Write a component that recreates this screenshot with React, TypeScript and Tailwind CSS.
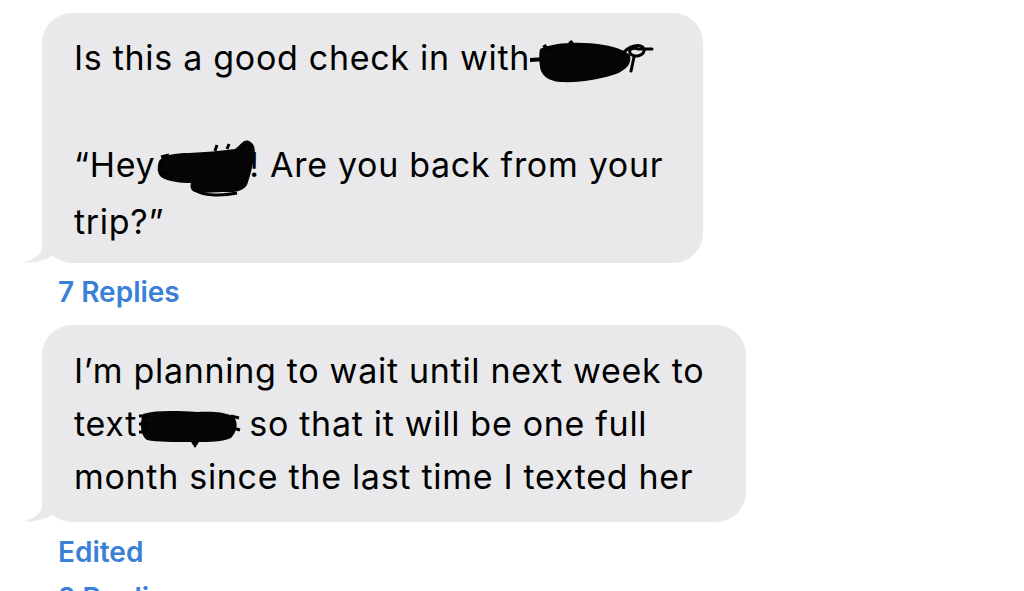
import React from "react"

const Tail = () => (
  <svg
    className="absolute left-[-22px] bottom-0"
    width="62"
    height="40"
    viewBox="0 0 62 40"
  >
    <path
      d="M22,0 L62,0 L62,40 C52,40 44,38 36,30 C28,37 16,40 3,39.5 C14,37 22,31 22,24 Z"
      fill="#e9e9eb"
    />
  </svg>
)

type ScribbleProps = { variant: 1 | 2 | 3 }

const Scribble = ({ variant }: ScribbleProps) => {
  if (variant === 1) {
    return (
      <svg width="124" height="46" viewBox="0 0 124 46" className="inline-block align-[-15px] -mr-[2px]">
        <path d="M0,21 L16,20" stroke="#000" strokeWidth="4" strokeLinecap="round" />
        <path
          d="M10,10 C24,3 52,2 74,6 C86,8 94,11 100,16 C102,25 96,31 86,35 C70,40 52,44 30,43 C18,42 11,36 10,28 C9,20 9,15 10,10 Z"
          fill="#050505"
        />
        <path d="M14,6 L18,12 M40,2 L44,8" stroke="#000" strokeWidth="4" />
        <path
          d="M92,16 C98,6 112,4 114,10 C116,16 104,20 100,14 C98,10 104,8 108,10 L122,10"
          stroke="#000"
          strokeWidth="3"
          fill="none"
          strokeLinecap="round"
        />
        <path d="M104,18 L101,32" stroke="#000" strokeWidth="3" strokeLinecap="round" />
      </svg>
    )
  }
  if (variant === 2) {
    return (
      <svg width="104" height="58" viewBox="0 0 104 58" className="inline-block align-[-20px] -mr-[10px]">
        <path
          d="M4,22 C8,16 20,14 34,14 C50,13 66,12 80,10 C86,6 88,0 94,2 C102,6 100,14 98,24 C96,34 94,40 92,46 C88,52 80,54 68,53 L46,54 C38,54 34,50 36,44 C24,44 12,42 6,38 C2,34 2,28 4,22 Z"
          fill="#050505"
        />
        <path d="M6,18 L14,16 M4,26 L10,26 M4,34 L12,34 M60,12 L62,6 M72,10 L74,5" stroke="#000" strokeWidth="3" />
        <path d="M42,52 C50,57 68,57 82,54" stroke="#000" strokeWidth="3" fill="none" />
      </svg>
    )
  }
  return (
    <svg width="104" height="40" viewBox="0 0 104 40" className="inline-block align-[-12px] -mr-[2px]">
      <path
        d="M6,6 C20,2 40,3 60,4 C74,3 88,4 96,8 C102,14 100,24 94,30 C86,34 72,34 62,34 L58,40 L54,34 C36,34 20,34 10,32 C4,28 2,16 6,6 Z"
        fill="#050505"
      />
      <path d="M2,8 L12,8 M2,16 L10,16 M2,24 L10,24 M94,8 L102,10 M96,20 L103,22" stroke="#000" strokeWidth="3" />
    </svg>
  )
}

export default function App() {
  return (
    <div
      className="w-[1024px] h-[591px] overflow-hidden bg-white"
      style={{ fontFamily: "Inter, Roboto, 'Liberation Sans', sans-serif" }}
    >
      <div className="pl-[42px] pt-[13px]">
        <div className="relative w-[661px] h-[250px] rounded-[30px] bg-[#e9e9eb] text-[34px] leading-[53px] tracking-[0.7px] text-black whitespace-nowrap">
          <Tail />
          <div className="relative pl-[32px] pt-[18px]">
            <div>
              Is this a good check in with<Scribble variant={1} />
            </div>
            <div className="h-[53px]" />
            <div>
              “Hey<Scribble variant={2} />! Are you back from your
            </div>
            <div className="-mt-[2px]">trip?”</div>
          </div>
        </div>

        <div className="mt-[16px] ml-[16px] text-[28px] leading-[27px] font-semibold text-[#3a80d6]">
          7 Replies
        </div>

        <div className="relative mt-[19px] w-[704px] h-[197px] rounded-[30px] bg-[#e9e9eb] text-[34px] leading-[53px] tracking-[0.7px] text-black whitespace-nowrap">
          <Tail />
          <div className="relative pl-[32px] pt-[19px]">
            <div>I’m planning to wait until next week to</div>
            <div>
              text<Scribble variant={3} /> so that it will be one full
            </div>
            <div>month since the last time I texted her</div>
          </div>
        </div>

        <div className="mt-[17px] ml-[16px] text-[28px] leading-[27px] font-semibold text-[#3a80d6]">
          Edited
        </div>
        <div className="mt-[19px] ml-[16px] text-[28px] leading-[27px] font-semibold text-[#3a80d6]">
          2 Replies
        </div>
      </div>
    </div>
  )
}
